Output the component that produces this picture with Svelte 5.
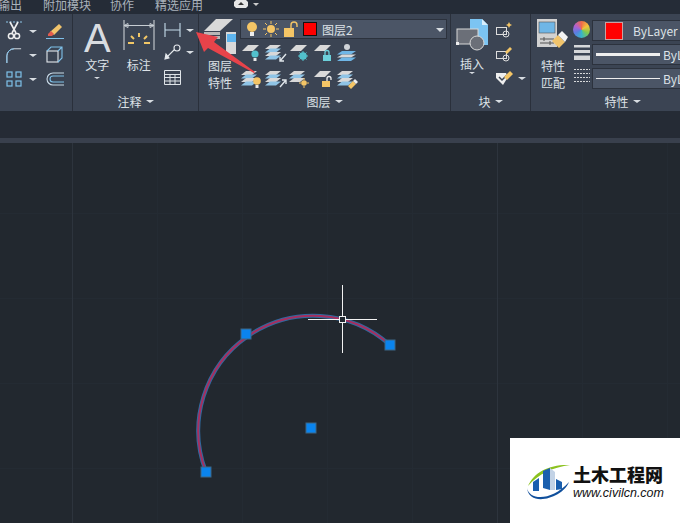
<script>
  const tabs = [
    { label: '输出', w: 45, off: -2 },
    { label: '附加模块', w: 67 },
    { label: '协作', w: 45 },
    { label: '精选应用', w: 80 }
  ];
  const layerRows = [
    ['bulbTeal', 'arrowDown', 'gearTeal', 'lockTeal', 'person'],
    ['bulbStack', 'arrowUp', 'sunStack', 'lockGold', 'brush']
  ];
  const grips = [
    [246, 334],
    [390, 345],
    [311, 428],
    [206, 472]
  ];
  // faint drawing grid
  const minorX = [157, 242, 327, 412, 582, 667];
  const minorY = [213, 298, 383, 468];
</script>

{#snippet caret(size = 3)}
  <i class="caret" style="border-width: {size}px {size + 1}px 0"></i>
{/snippet}

{#snippet sheets(x, y, n = 1)}
  {#each Array(n) as _, i}
    <path d="M{x + 5} {y + i * 3.5}h11l-5 4h-11z" fill={i % 2 ? '#8fc4e6' : '#d8d8d8'} />
  {/each}
{/snippet}

{#snippet layerIcon(name)}
  <svg width="24" height="22" viewBox="0 0 24 22">
    {#if name === 'bulbTeal'}
      <path d="M7 2h11l-6 6h-11z" fill="#d9d9d9" />
      <circle cx="14" cy="11" r="3.6" fill="#52c0cc" />
      <rect x="12.500" y="15" width="3" height="3" fill="#e8e8e8" />
    {:else if name === 'arrowDown'}
      {@render sheets(0, 2, 4)}
      <path d="M21 11l-6 7m0-4v4h4" stroke="#dfe5ea" stroke-width="1.4" fill="none" />
    {:else if name === 'gearTeal'}
      <path d="M7 2h11l-6 6h-11z" fill="#d9d9d9" />
      <circle cx="14" cy="13" r="3.8" fill="#52c0cc" />
      <path d="M14 8v10M9 13h10M10.500 9.500l7 7M17.500 9.500l-7 7" stroke="#52c0cc" stroke-width="1" />
    {:else if name === 'lockTeal'}
      <path d="M7 2h11l-6 6h-11z" fill="#d9d9d9" />
      <rect x="10" y="12" width="8" height="6" fill="#6cd0da" />
      <path d="M12 12V9.500a2 2 0 0 1 4 0V12" stroke="#6cd0da" stroke-width="1.300" fill="none" />
    {:else if name === 'person'}
      <circle cx="10" cy="4" r="3" fill="#cfd3d8" />
      <path d="M5 8h14l-5 3.500h-14z" fill="#6fb6e6" />
      <path d="M5 11.500h14l-5 3h-14z" fill="#d8d8d8" />
      <path d="M5 14.500h14l-5 3.500h-14z" fill="#6fb6e6" />
    {:else if name === 'bulbStack'}
      {@render sheets(0, 2, 4)}
      <circle cx="16" cy="12" r="3.800" fill="#f4c566" />
      <rect x="14.500" y="16" width="3" height="3" fill="#e8e8e8" />
    {:else if name === 'arrowUp'}
      {@render sheets(0, 2, 4)}
      <path d="M15 18l6-7m-4 0h4v4" stroke="#dfe5ea" stroke-width="1.400" fill="none" />
    {:else if name === 'sunStack'}
      {@render sheets(0, 2, 3)}
      <circle cx="15" cy="14" r="2.800" fill="#f4c566" />
      <path d="M15 9v2M15 17v2M10 14h2M18 14h2" stroke="#f4c566" stroke-width="1" />
    {:else if name === 'lockGold'}
      <path d="M7 2h11l-6 6h-11z" fill="#d9d9d9" />
      <rect x="9" y="12" width="8" height="6" fill="#f4c566" />
      <path d="M14 12V9.500a2 2 0 0 1 4 0V11" stroke="#f0f0f0" stroke-width="1.300" fill="none" />
    {:else if name === 'brush'}
      {@render sheets(0, 2, 4)}
      <path d="M11 17l5-5 3 3-5 5z" fill="#f4c566" />
      <path d="M16 12l2-2 3 3-2 2z" fill="#eee" />
    {/if}
  </svg>
{/snippet}

<div class="app">
  <nav class="tabs">
    {#each tabs as tab}
      <span class="tab" style="width: {tab.w}px; margin-left: {tab.off ?? 0}px">{tab.label}</span>
    {/each}
    <svg class="view-icon" width="14" height="8" viewBox="0 0 14 8">
      <path d="M2 0h10l2 2v4l-2 2h-10l-2-2v-4z" fill="#e6e6e6" />
      <path d="M4 5l3-3 3 3z" fill="#333" />
    </svg>
    <i class="view-caret"></i>
  </nav>

  <section class="ribbon">
    <!-- modify -->
    <div class="panel modify">
      <div class="panel-body tools">
        <div class="tool">
          <svg width="16" height="20" viewBox="0 0 16 20">
            <path d="M0 1h16" stroke="#8fc7ea" stroke-width="1" stroke-dasharray="2 1.500" />
            <path d="M4 1l6 11M12 1l-6 11" stroke="#eee" stroke-width="1.600" />
            <circle cx="5" cy="15" r="2.600" fill="none" stroke="#eee" stroke-width="1.500" />
            <circle cx="11" cy="15" r="2.600" fill="none" stroke="#eee" stroke-width="1.500" />
          </svg>
          {@render caret()}
        </div>
        <svg class="tool-b" width="18" height="18" viewBox="0 0 18 18">
          <path d="M4 10l9-8 3 3-8 8z" fill="#f1c46c" />
          <path d="M2 12l3-3 3 3-2 2-4 0z" fill="#e25a4e" />
          <path d="M0 16.500h18" stroke="#7fc1ea" />
        </svg>
        <div class="tool">
          <svg width="16" height="18" viewBox="0 0 18 18">
            <path d="M1 18v-8a8 8 0 0 1 8-8h8" fill="none" stroke="#d6dde3" stroke-width="1.100" />
            <path d="M1 18v-8a8 8 0 0 1 8-8" fill="none" stroke="#7fc1ea" stroke-width="1.100" />
          </svg>
          {@render caret()}
        </div>
        <svg class="tool-b" width="18" height="18" viewBox="0 0 18 18" fill="none" stroke="#7fc1ea" stroke-width="1.100">
          <rect x="1" y="5" width="11" height="11" stroke="#e4e9ed" />
          <path d="M1 5l4-4h11v11l-4 4M12 5l4-4" />
        </svg>
        <div class="tool">
          <svg width="16" height="16" viewBox="0 0 16 16" fill="none" stroke="#7fc1ea" stroke-width="1.200">
            <rect x="1" y="1" width="5" height="5" />
            <rect x="10" y="1" width="5" height="5" />
            <rect x="1" y="10" width="5" height="5" />
            <rect x="10" y="10" width="5" height="5" />
          </svg>
          {@render caret()}
        </div>
        <svg class="tool-b" width="18" height="14" viewBox="0 0 18 14" fill="none" stroke="#c9dbe8" stroke-width="1.100">
          <path d="M18 1h-11a6 6 0 0 0 0 12h11" />
          <path d="M18 4h-11a3 3 0 0 0 0 6h11" stroke="#7fc1ea" />
        </svg>
      </div>
      <div class="panel-title"></div>
    </div>

    <!-- annotation -->
    <div class="panel annotate">
      <div class="panel-body annotate-body">
        <div class="big-tool text-tool">
          <span class="big-a">A</span>
          <span>文字</span>
          {@render caret(2)}
        </div>
        <div class="big-tool">
          <svg width="32" height="32" viewBox="0 0 32 32" fill="none">
            <path d="M1 0v30M31 0v30" stroke="#d8dce0" />
            <path d="M1 5.500h30M1 5.500l4-2v4zM31 5.500l-4-2v4z" stroke="#c7cdd3" />
            <path d="M16 13v4M8 16l3 3M24 16l-3 3M5 23h6M21 23h6" stroke="#f2c766" stroke-width="2" />
          </svg>
          <span>标注</span>
        </div>
        <div class="annotate-side">
          <div class="tool">
            <svg width="17" height="14" viewBox="0 0 17 14" fill="none" stroke="#c5dcec" stroke-width="1.100">
              <path d="M1 0v14M16 0v14M1 7h15" />
            </svg>
            {@render caret()}
          </div>
          <div class="tool">
            <svg width="17" height="16" viewBox="0 0 17 16" fill="none" stroke="#e4e8ec" stroke-width="1.100">
              <circle cx="13" cy="4" r="3" />
              <path d="M10.500 5.500L2 14" />
              <path d="M1 15l1-5 3 4z" fill="#e4e8ec" />
            </svg>
            {@render caret()}
          </div>
          <svg class="table-icon" width="17" height="15" viewBox="0 0 17 15" fill="none" stroke="#dfe4e8" stroke-width="1">
            <path d="M.5.500h16v14h-16zM.5 4.500h16M.5 7.500h16M.5 11h16M6 4.500v10M11 4.500v10" />
          </svg>
        </div>
      </div>
      <div class="panel-title">注释 {@render caret()}</div>
    </div>

    <!-- layers -->
    <div class="panel layers">
      <div class="panel-body layers-body">
        <div class="big-tool layer-props">
          <svg width="32" height="36" viewBox="0 0 32 36">
            <path d="M12 0h17l-13 12h-16z" fill="#d9d9d9" />
            <path d="M0 13h16v3h-16zM0 17h16v3h-16z" fill="#b8b8b8" />
            <rect x="22" y="13" width="11" height="22" fill="#d9d9d9" />
            <rect x="23" y="15" width="9" height="8" fill="#5db4ee" />
          </svg>
          <span>图层<br />特性</span>
        </div>
        <div class="layers-main">
          <div class="combo layer-combo">
            <svg width="12" height="16" viewBox="0 0 12 16">
              <circle cx="6" cy="6" r="5" fill="#f4c566" />
              <rect x="4" y="11" width="4" height="4" fill="#eee" />
            </svg>
            <svg width="16" height="16" viewBox="0 0 16 16">
              <circle cx="8" cy="8" r="4" fill="#f4c566" />
              <path d="M8 0v3M8 13v3M0 8h3M13 8h3M2 2l2 2M12 12l2 2M2 14l2-2M12 4l2-2" stroke="#f4c566" />
            </svg>
            <svg width="14" height="16" viewBox="0 0 14 16">
              <rect x="0" y="7" width="10" height="9" fill="#f4c566" />
              <path d="M7 7V4a3 3 0 0 1 6 0v2" stroke="#f4c566" stroke-width="1.400" fill="none" />
            </svg>
            <i class="swatch"></i>
            <span class="combo-name">图层2</span>
            <i class="combo-caret"></i>
          </div>
          {#each layerRows as row}
            <div class="layer-row">
              {#each row as name}
                {@render layerIcon(name)}
              {/each}
            </div>
          {/each}
        </div>
      </div>
      <div class="panel-title">图层 {@render caret()}</div>
    </div>

    <!-- block -->
    <div class="panel block">
      <div class="panel-body block-body">
        <div class="big-tool">
          <svg width="32" height="32" viewBox="0 0 32 32">
            <path d="M14 0h12l6 6v20h-18z" fill="#7cc4f2" />
            <path d="M26 0l6 6h-6z" fill="#d8eefc" />
            <rect x="1" y="10" width="21" height="15" fill="#6b6f78" stroke="#d8d8d8" />
            <circle cx="21" cy="24" r="7" fill="#6b6f78" stroke="#d8d8d8" />
            <rect x="0" y="23" width="3" height="3" fill="#eee" />
          </svg>
          <span>插入</span>
          {@render caret(2)}
        </div>
        <div class="block-side">
          <svg width="16" height="16" viewBox="0 0 16 16" fill="none" stroke="#ddd">
            <rect x=".5" y="5.500" width="10" height="7" />
            <circle cx="10" cy="12" r="3" />
            <path d="M13 0l1 2 2 1-2 1-1 2-1-2-2-1 2-1z" fill="#f4c566" stroke="none" />
          </svg>
          <svg width="16" height="16" viewBox="0 0 16 16" fill="none" stroke="#ddd">
            <rect x=".5" y="5.500" width="10" height="7" />
            <circle cx="10" cy="12" r="3" />
            <path d="M9 6l5-5 2 2-5 5z" fill="#f4c566" stroke="none" />
          </svg>
          <div class="tool">
            <svg width="17" height="16" viewBox="0 0 17 16">
              <path d="M0 3h10l2 4-5 8-7-7z" fill="#eee" />
              <path d="M3 7l3 3 5-5" stroke="#3b4453" stroke-width="1.500" fill="none" />
              <path d="M8 7l6-6 3 3-6 6z" fill="#f4c566" />
            </svg>
            {@render caret()}
          </div>
        </div>
      </div>
      <div class="panel-title">块 {@render caret()}</div>
    </div>

    <!-- properties -->
    <div class="panel props">
      <div class="panel-body props-body">
        <div class="big-tool match">
          <svg width="32" height="34" viewBox="0 0 32 34">
            <rect width="20" height="28" fill="#d2d2d2" />
            <rect x="2" y="3" width="16" height="11" fill="#6fb6e6" stroke="#555" stroke-width=".6" />
            <path d="M3 20h14M3 24h14M7 18v4M13 22v4" stroke="#555" />
            <path d="M15 22l6-6 7 7-6 6z" fill="#f1c46c" />
            <path d="M21 16l4-4 6 6-3 5z" fill="#f3f3f3" />
          </svg>
          <span>特性<br />匹配</span>
        </div>
        <div class="props-icons">
          <i class="wheel"></i>
          <svg width="16" height="16" viewBox="0 0 16 16" fill="#d6d8da">
            <path d="M0 0h16v2.500h-16zM0 5h16v3h-16zM0 10.500h16v4.500h-16z" />
          </svg>
          <svg width="16" height="16" viewBox="0 0 16 16" fill="none" stroke="#d6d8da">
            <path d="M0 1.500h16M0 5.500h16M0 9.500h16M0 13.500h16" stroke-dasharray="2 1" />
          </svg>
        </div>
        <div class="props-combos">
          <div class="combo prop-combo"><i class="swatch big"></i><span class="by-label">ByLayer</span></div>
          <div class="combo prop-combo"><i class="line thick"></i><span>ByL</span></div>
          <div class="combo prop-combo"><i class="line thin"></i><span>ByL</span></div>
        </div>
      </div>
      <div class="panel-title">特性 {@render caret()}</div>
    </div>

    <svg class="pointer" width="60" height="42" viewBox="0 0 60 42">
      <path d="M0 0l22 5-4 5 41 30-1 1-46-25-4 4z" fill="#e8434a" />
    </svg>
  </section>

  <div class="gap-band"></div>
  <div class="file-strip"></div>

  <main class="canvas">
    <svg class="drawing" width="680" height="380" viewBox="0 143 680 380">
      {#each minorX as x}
        <path d="M{x + .5} 143V523" stroke="#242b33" />
      {/each}
      {#each minorY as y}
        <path d="M0 {y + .5}H680" stroke="#242b33" />
      {/each}
      <path d="M72.500 143V523M497.500 143V523" stroke="#2d343d" />
      <path d="M206 472A115 115 0 0 1 390 345" fill="none" stroke="#2f6aa0" stroke-width="4" />
      <path d="M206 472A115 115 0 0 1 390 345" fill="none" stroke="#a62f5f" stroke-width="2" />
      {#each grips as [x, y]}
        <rect x={x - 5} y={y - 5} width="10" height="10" fill="#0a84ee" stroke="#3d6686" />
      {/each}
      <path d="M342.500 285V353M308 319.500H377" stroke="#f2f2f2" />
      <rect x="339.500" y="316.500" width="6" height="6" fill="#212830" stroke="#f2f2f2" />
    </svg>

    <aside class="watermark">
      <svg width="46" height="38" viewBox="0 0 46 38">
        <path d="M2 22C8 8 24 0 44 1 28 3 12 10 2 22z" fill="#8cc21f" />
        <path d="M1 24c2 12 24 14 42-6-6 16-40 26-42 6z" fill="#104f9c" />
        <path d="M17 24V7l7-3v22z" fill="#1a5fae" />
        <path d="M24 4l5 4v18h-5z" fill="#c3d3e6" />
        <path d="M7 27V18l6-4v13z" fill="#1a5fae" />
        <path d="M30 26V15l6 3v7z" fill="#1a5fae" />
      </svg>
      <div class="wm-text">
        <strong>土木工程网</strong>
        <em>www.civilcn.com</em>
      </div>
    </aside>
  </main>
</div>

<style>
  :global(body) {
    margin: 0;
    background: #212830;
  }

  .app {
    width: 680px;
    height: 523px;
    overflow: hidden;
    position: relative;
    font-family: "Noto Sans CJK SC", "Liberation Sans", sans-serif;
    font-size: 12px;
    color: #dde2e7;
  }

  .tabs {
    height: 14px;
    background: #252c37;
    display: flex;
    align-items: flex-start;
    overflow: hidden;
    color: #aab2bb;
    line-height: 9px;
    position: relative;
  }

  .tab {
    display: block;
    white-space: nowrap;
  }

  .view-icon {
    position: absolute;
    left: 234px;
    top: 0;
  }

  .view-caret {
    position: absolute;
    left: 253px;
    top: 3px;
    border-style: solid;
    border-width: 3px 3px 0;
    border-color: #ccc transparent transparent;
  }

  .ribbon {
    height: 97px;
    display: flex;
    background: #3b4453;
    position: relative;
    overflow: hidden;
  }

  .panel {
    flex: none;
    display: flex;
    flex-direction: column;
    border-right: 1px solid #2a303b;
    box-sizing: border-box;
  }

  .panel-body {
    flex: 1;
    min-height: 0;
    display: flex;
  }

  .panel-title {
    height: 20px;
    padding-bottom: 0;
    display: flex;
    align-items: center;
    justify-content: center;
    gap: 4px;
    color: #dde2e7;
  }

  .caret {
    display: inline-block;
    border-style: solid;
    border-color: #d8dde2 transparent transparent;
    width: 0;
    height: 0;
  }

  .modify {
    width: 73px;
  }

  .tools {
    display: grid;
    grid-template-columns: 40px 1fr;
    grid-auto-rows: 24px;
    padding: 5px 0 0 6px;
    align-items: center;
  }

  .tool {
    display: flex;
    align-items: center;
    gap: 7px;
  }

  .tool-b {
    justify-self: start;
  }

  .annotate {
    width: 126px;
  }

  .annotate-body {
    padding: 6px 0 0 11px;
    gap: 12px;
  }

  .annotate-side {
    display: flex;
    flex-direction: column;
    gap: 7px;
    padding-top: 3px;
    margin-left: -3px;
  }

  .annotate-side .tool {
    gap: 5px;
  }

  .big-tool {
    display: flex;
    flex-direction: column;
    align-items: center;
    line-height: 17px;
    text-align: center;
  }

  .big-tool svg {
    margin-bottom: 4px;
  }

  .text-tool .caret {
    margin-top: 4px;
  }

  .big-a {
    font-family: "Liberation Sans", sans-serif;
    font-size: 40px;
    line-height: 36px;
    color: #d9dce0;
  }

  .table-icon {
    margin-top: 3px;
  }

  .layers {
    width: 252px;
  }

  .layers-body {
    padding: 5px 0 0 6px;
    gap: 5px;
  }

  .layer-props {
    width: 30px;
  }

  .layer-props svg {
    margin-bottom: 2px;
  }

  .layers-main {
    display: flex;
    flex-direction: column;
  }

  .combo {
    background: #4b5566;
    border: 1px solid #2c323d;
    box-sizing: border-box;
    display: flex;
    align-items: center;
    position: relative;
  }

  .layer-combo {
    width: 207px;
    height: 21px;
    padding-left: 5px;
    gap: 5px;
  }

  .swatch {
    width: 12px;
    height: 12px;
    background: #f00;
    border: 1px solid #111;
  }

  .combo-name {
    margin-left: 0;
  }

  .combo-caret {
    position: absolute;
    right: 2px;
    top: 8px;
    border-style: solid;
    border-width: 4px 4px 0;
    border-color: #d8dde2 transparent transparent;
  }

  .layer-row {
    display: flex;
    padding: 4px 0 0 1px;
  }

  .block {
    width: 80px;
  }

  .block-body {
    padding: 5px 0 0 5px;
    gap: 8px;
  }

  .block-side {
    display: flex;
    flex-direction: column;
    gap: 8px;
    padding-top: 3px;
  }

  .block-side .tool {
    gap: 5px;
  }

  .props {
    width: 183px;
    border-right: none;
  }

  .props-body {
    padding: 5px 0 0 7px;
  }

  .match {
    width: 30px;
  }

  .props-icons {
    display: flex;
    flex-direction: column;
    align-items: center;
    gap: 7px;
    margin-left: 5px;
    padding-top: 2px;
    width: 17px;
  }

  .wheel {
    width: 17px;
    height: 17px;
    border-radius: 50%;
    background: conic-gradient(#ef6b4a, #f2c33c, #7ec850, #38b4c8, #5a7ee0, #b060d0, #ef6b4a);
  }

  .props-combos {
    display: flex;
    flex-direction: column;
    gap: 3px;
    margin-left: 2px;
    margin-top: 1px;
  }

  .prop-combo {
    flex: none;
    width: 100px;
    height: 21px;
    gap: 3px;
    padding-left: 3px;
    white-space: nowrap;
  }

  .swatch.big {
    width: 16px;
    height: 16px;
    margin-left: 9px;
    background: #f00;
    border-color: #c9a0a0;
  }

  .by-label {
    margin-left: 7px;
  }

  .line {
    width: 64px;
    background: #eee;
  }

  .line.thick {
    height: 3px;
  }

  .line.thin {
    height: 1px;
  }

  .pointer {
    position: absolute;
    left: 196px;
    top: 18px;
  }

  .gap-band {
    height: 27px;
    background: #252b35;
  }

  .file-strip {
    height: 5px;
    background: #39404d;
  }

  .canvas {
    height: 380px;
    background: #22282f;
    position: relative;
  }

  .drawing {
    display: block;
  }

  .watermark {
    position: absolute;
    right: 0;
    bottom: 0;
    width: 170px;
    height: 85px;
    background: #fff;
    display: flex;
    align-items: center;
    padding: 4px 0 0 16px;
    box-sizing: border-box;
    gap: 1px;
  }

  .wm-text {
    display: flex;
    flex-direction: column;
    color: #111;
    line-height: 1;
    gap: 4px;
  }

  .wm-text strong {
    font-size: 18px;
    font-weight: 900;
  }

  .wm-text em {
    font-family: "Liberation Sans", sans-serif;
    font-size: 12.500px;
  }
</style>
